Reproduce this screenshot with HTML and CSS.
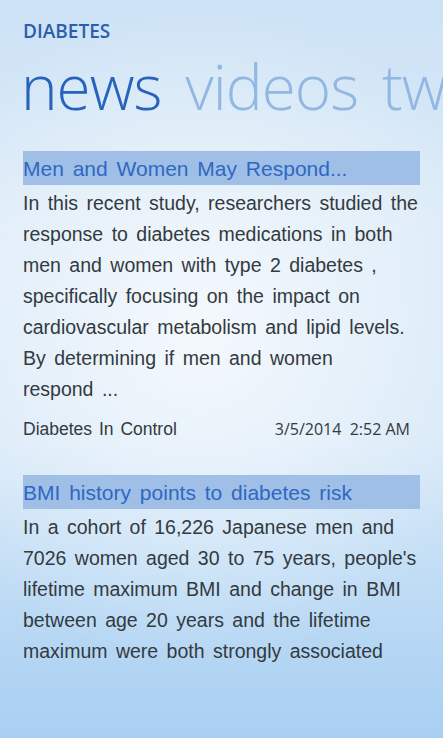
FILE: index.html
```html
<!DOCTYPE html>
<html lang="en">
<head>
  <meta charset="UTF-8" />
  <meta name="viewport" content="width=device-width, initial-scale=1" />
  <title>Diabetes - news</title>
  <link rel="stylesheet" href="styles.css">
</head>
<body>
  <header class="app-header">
    <div class="app-title">DIABETES</div>
    <nav class="pivot">
      <span class="pivot-item active">news</span>
      <span class="pivot-item">videos</span>
      <span class="pivot-item">tweets</span>
    </nav>
  </header>

  <main class="feed">
    <article class="story">
      <h2 class="story-title">Men and Women May Respond...</h2>
      <p class="story-body">In this recent study, researchers studied the response to diabetes medications in both men and women with type 2 diabetes , specifically focusing on the impact on cardiovascular metabolism and lipid levels. By determining if men and women<br>respond ...</p>
      <div class="story-meta">
        <span class="story-source">Diabetes In Control</span>
        <span class="story-date">3/5/2014&nbsp; 2:52 AM</span>
      </div>
    </article>

    <article class="story">
      <h2 class="story-title">BMI history points to diabetes risk</h2>
      <p class="story-body">In a cohort of 16,226 Japanese men and 7026 women aged 30 to 75 years, people's lifetime maximum BMI and change in BMI between age 20 years and the lifetime maximum were both strongly associated</p>
    </article>
  </main>
</body>
</html>
```

FILE: styles.css
```css
html, body {
  height: 100%;
}
body {
  margin: 0;
  overflow: hidden;
  font-family: 'Liberation Sans', Arial, sans-serif;
  color: #333a40;
  background:
    radial-gradient(ellipse 70% 45% at 45% 45%, rgba(255, 255, 255, 0.7), rgba(255, 255, 255, 0) 100%),
    linear-gradient(180deg, #cce2f5 0%, #dcebf8 30%, #d8e9f8 60%, #b8d8f4 85%, #a9cff3 100%);
}
.app-header {
  padding: 19px 0 0 23px;
  white-space: nowrap;
}
.app-title {
  font-family: 'Open Sans', sans-serif;
  font-weight: 600;
  font-size: 19px;
  color: #2a5fae;
  line-height: 24px;
}
/* the last pivot header runs off the right edge, as on the phone */
.pivot {
  display: flex;
  gap: 24px;
  margin-top: 3px;
  margin-left: -2px;
  font-family: 'Open Sans', sans-serif;
  font-weight: 300;
  font-size: 62px;
  line-height: 80px;
  letter-spacing: -1px;
}
.pivot-item {
  flex-shrink: 0;
  color: #93b7e3;
}
.pivot-item.active {
  color: #2762bd;
}
.feed {
  padding: 25px 23px 0 23px;
}
.story {
  margin-bottom: 36px;
}
.story-title {
  margin: 0;
  height: 34px;
  padding-top: 3px;
  box-sizing: border-box;
  background: #9fbfe7;
  font-weight: normal;
  font-size: 21px;
  line-height: 30px;
  word-spacing: 3px;
  color: #2f68c2;
}
.story-body {
  margin: 0;
  padding-top: 3px;
  font-size: 19.5px;
  line-height: 31px;
  word-spacing: 3px;
}
.story-meta {
  display: flex;
  justify-content: space-between;
  margin-top: 14px;
  padding-right: 10px;
  font-size: 17.5px;
  line-height: 20px;
}
.story-source {
  word-spacing: 2px;
}
.story-date {
  font-family: 'Open Sans', sans-serif;
  font-size: 16px;
}
```
